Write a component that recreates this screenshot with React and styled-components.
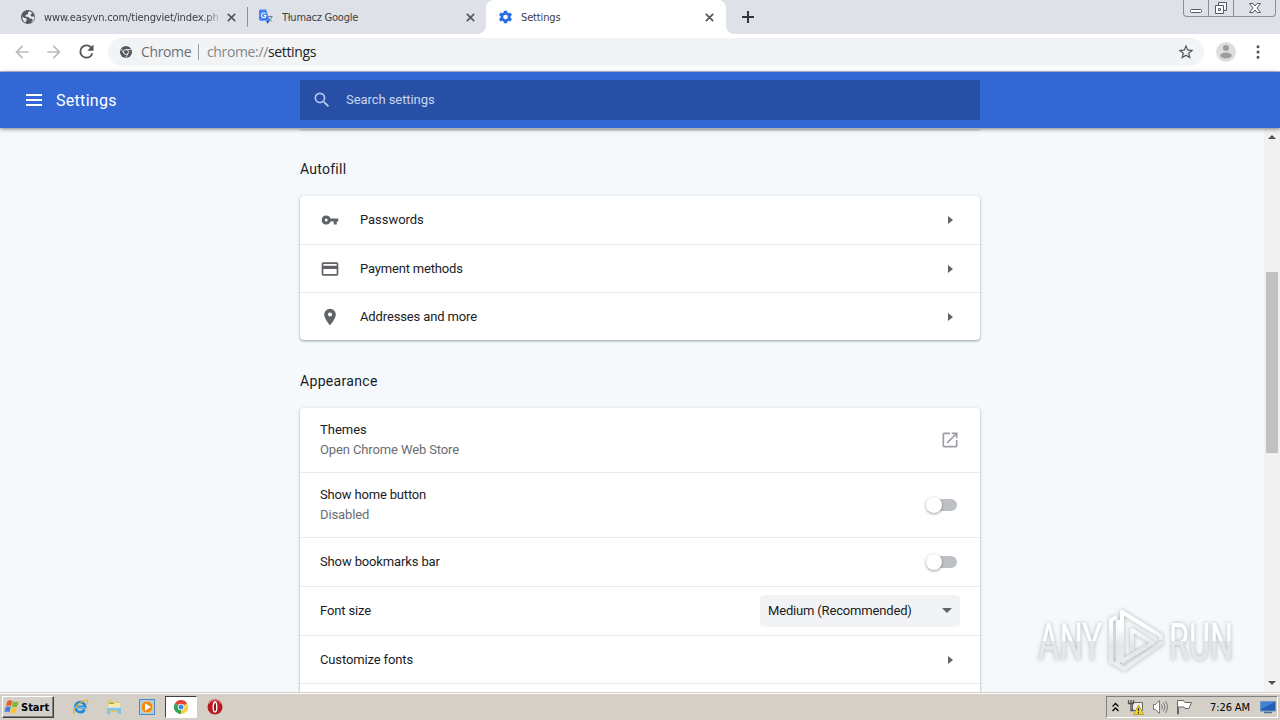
import React from 'react'
import styled, { createGlobalStyle } from 'styled-components'

const App = () => {
    return (
        <Screen>
            <GlobalStyle/>
            <TabStrip>
                <Tab $width={248} $left={20}>
                    <GlobeIcon/>
                    <TabTitle $width={175} $spacing="-0.14px" $fade>www.easyvn.com/tiengviet/index.ph</TabTitle>
                    <CloseIcon/>
                </Tab>
                <TabDivider/>
                <Tab $width={239} $left={11}>
                    <TranslateIcon/>
                    <TabTitle $width={176} $spacing="-0.25px">Tłumacz Google</TabTitle>
                    <CloseIcon/>
                </Tab>
                <ActiveTab $width={240} $left={12}>
                    <GearIcon/>
                    <TabTitle $width={176} $spacing="-0.15px">Settings</TabTitle>
                    <CloseIcon/>
                </ActiveTab>
                <NewTab>
                    <svg width="12" height="12"><path d="M6 0v12M0 6h12" stroke="#32363b" strokeWidth="2"/></svg>
                </NewTab>
                <WindowButtons>
                    <WindowButton $width={25}>
                        <svg width="14" height="16"><rect x="1.5" y="9.5" width="11" height="3" rx="1" fill="#fff" stroke="#555a66"/></svg>
                    </WindowButton>
                    <WindowButton $width={25}>
                        <svg width="14" height="16">
                            <path d="M4.500 2.500h8v8h-8z" fill="#f4f5f7" stroke="#555a66"/>
                            <path d="M1.500 5.500h8v8h-8z" fill="#fff" stroke="#555a66"/>
                            <path d="M4.500 8.500h2v2h-2z" fill="none" stroke="#555a66"/>
                        </svg>
                    </WindowButton>
                    <WindowButton $width={41}>
                        <svg width="14" height="16"><path d="M1.500 3.500h3.500l2 2.500 2-2.500h3.500l-3.500 4.500 3.500 4.500H9l-2-2.500-2 2.500H1.500L5 8z" fill="#fff" stroke="#555a66"/></svg>
                    </WindowButton>
                </WindowButtons>
            </TabStrip>
            <Toolbar>
                <NavButton><Glyph size={20} color="#b8babd" d="M20 11H7.830l5.590-5.590L12 4l-8 8 8 8 1.410-1.410L7.830 13H20v-2z"/></NavButton>
                <NavButton><Glyph size={20} color="#b8babd" d="M12 4l-1.410 1.410L16.170 11H4v2h12.170l-5.580 5.590L12 20l8-8z"/></NavButton>
                <NavButton><Glyph size={21} color="#505357" d="M17.650 6.350A7.958 7.958 0 0 0 12 4a8 8 0 1 0 7.730 10h-2.080A5.990 5.990 0 0 1 12 18a6 6 0 1 1 0-12c1.660 0 3.140.69 4.220 1.780L13 11h7V4l-2.350 2.350z"/></NavButton>
                <Omnibox>
                    <ChromeMark/>
                    <Scheme>Chrome</Scheme>
                    <OmniDivider/>
                    <Url><span>chrome://</span>settings</Url>
                    <Glyph size={18} color="#505357" d="M22 9.240l-7.190-.62L12 2 9.190 8.630 2 9.240l5.460 4.730L5.820 21 12 17.270 18.180 21l-1.630-7.030L22 9.240zM12 15.400l-3.760 2.270 1-4.280-3.320-2.880 4.380-.38L12 6.100l1.710 4.040 4.380.38-3.320 2.880 1 4.280L12 15.400z"/>
                </Omnibox>
                <Avatar>
                    <svg width="20" height="20"><circle cx="10" cy="10" r="10" fill="#dddddf"/><circle cx="10" cy="6" r="3" fill="#9b9c9e"/><ellipse cx="10" cy="13.500" rx="5.700" ry="3" fill="#9b9c9e"/></svg>
                </Avatar>
                <Glyph size={20} color="#505357" d="M12 7.500a1.800 1.800 0 1 0 0-3.600 1.800 1.800 0 0 0 0 3.600zm0 2.700a1.800 1.800 0 1 0 0 3.600 1.800 1.800 0 0 0 0-3.600zm0 6.300a1.800 1.800 0 1 0 0 3.600 1.800 1.800 0 0 0 0-3.600z"/>
            </Toolbar>
            <Header>
                <Brand>
                    <svg width="16" height="12"><path d="M0 1h16M0 6h16M0 11h16" stroke="#fff" strokeWidth="2"/></svg>
                    <HeaderTitle>Settings</HeaderTitle>
                </Brand>
                <Search>
                    <Glyph size={20} color="#b9cbf1" d="M15.500 14h-.79l-.28-.27A6.471 6.471 0 0 0 16 9.500 6.500 6.500 0 1 0 9.500 16c1.610 0 3.090-.59 4.230-1.570l.27.28v.79l5 4.990L20.490 19l-4.990-5zm-6 0a4.500 4.500 0 1 1 0-9 4.500 4.500 0 0 1 0 9z"/>
                    <SearchText>Search settings</SearchText>
                </Search>
            </Header>
            <Content>
                <Column>
                    <PreviousCard/>
                    <SectionTitle $height={67} $top={30} $spacing="0.25px">Autofill</SectionTitle>
                    <Card>
                        <Row $height={48}>
                            <RowIcon><Glyph size={18} color="#5f6368" d="M12.650 10A5.990 5.990 0 0 0 7 6a6 6 0 1 0 5.650 8H17v4h4v-4h2v-4H12.650zM7 14a2 2 0 1 1 0-4 2 2 0 0 1 0 4z"/></RowIcon>
                            <Label $spacing="-0.05px">Passwords</Label>
                            <Arrow/>
                        </Row>
                        <Row $height={47}>
                            <RowIcon><Glyph size={20} color="#5f6368" d="M20 4H4c-1.110 0-1.990.89-1.990 2L2 18c0 1.110.89 2 2 2h16c1.110 0 2-.89 2-2V6c0-1.110-.89-2-2-2zm0 14H4v-6h16v6zm0-10H4V6h16v2z"/></RowIcon>
                            <Label $spacing="-0.18px">Payment methods</Label>
                            <Arrow/>
                        </Row>
                        <Row $height={47}>
                            <RowIcon><Glyph size={20} color="#5f6368" d="M12 2a7 7 0 0 0-7 7c0 5.250 7 13 7 13s7-7.750 7-13a7 7 0 0 0-7-7zm0 9.500a2.500 2.500 0 1 1 0-5 2.500 2.500 0 0 1 0 5z"/></RowIcon>
                            <Label>Addresses and more</Label>
                            <Arrow/>
                        </Row>
                    </Card>
                    <SectionTitle $height={68} $top={31} $spacing="0.33px">Appearance</SectionTitle>
                    <Card>
                        <Row $height={64}>
                            <div>
                                <Label $spacing="0">Themes</Label>
                                <SubLabel>Open Chrome Web Store</SubLabel>
                            </div>
                            <Glyph size={20} color="#9a9ea3" d="M19 19H5V5h7V3H5a2 2 0 0 0-2 2v14a2 2 0 0 0 2 2h14c1.100 0 2-.9 2-2v-7h-2v7zM14 3v2h3.590l-9.830 9.830 1.410 1.410L19 6.410V10h2V3h-7z"/>
                        </Row>
                        <Row $height={64}>
                            <div>
                                <Label $spacing="-0.17px">Show home button</Label>
                                <SubLabel>Disabled</SubLabel>
                            </div>
                            <Toggle><Knob/></Toggle>
                        </Row>
                        <Row $height={48}>
                            <Label>Show bookmarks bar</Label>
                            <Toggle><Knob/></Toggle>
                        </Row>
                        <Row $height={48}>
                            <Label>Font size</Label>
                            <Select>
                                Medium (Recommended)
                                <svg width="10" height="5"><path d="M0 0h10L5 5z" fill="#5f6368"/></svg>
                            </Select>
                        </Row>
                        <Row $height={47}>
                            <Label>Customize fonts</Label>
                            <Arrow/>
                        </Row>
                        <Row $height={48}/>
                    </Card>
                </Column>
                <Scrollbar>
                    <svg width="8" height="4"><path d="M0 4h8L4 0z" fill="#505050"/></svg>
                    <Thumb/>
                    <svg width="8" height="4"><path d="M0 0h8L4 4z" fill="#505050"/></svg>
                </Scrollbar>
                <Watermark/>
            </Content>
            <Taskbar>
                <StartButton><WindowsFlag/>Start</StartButton>
                <QuickLaunch>
                    <TaskItem><ExplorerIcon/></TaskItem>
                    <TaskItem><FolderIcon/></TaskItem>
                    <TaskItem><PlayerIcon/></TaskItem>
                    <TaskItem $pressed><ChromeIcon/></TaskItem>
                    <TaskItem><OperaIcon/></TaskItem>
                </QuickLaunch>
                <Tray>
                    <svg width="7" height="10"><path d="M.5 4.500l3-3 3 3M.5 9l3-3 3 3" fill="none" stroke="#000" strokeWidth="1.300"/></svg>
                    <NetworkIcon/>
                    <SpeakerIcon/>
                    <FlagIcon/>
                    <Clock>7:26 AM</Clock>
                    <DesktopIcon/>
                </Tray>
            </Taskbar>
        </Screen>
    )
}

export default App

const Glyph = ({ size, color, d }) => (
    <svg width={size} height={size} viewBox="0 0 24 24"><path d={d} fill={color}/></svg>
)

const Arrow = () => (
    <ArrowBox><svg width="5" height="8"><path d="M0 0v8l5-4z" fill="#5f6368"/></svg></ArrowBox>
)

const CloseIcon = () => (
    <svg width="9" height="9"><path d="M.8.8l7.400 7.400M8.200.8L.8 8.200" stroke="#55585d" strokeWidth="1.700"/></svg>
)

const GlobeIcon = () => (
    <svg width="16" height="16" viewBox="0 0 16 16">
        <circle cx="8" cy="8" r="7" fill="#55595e"/>
        <path d="M9.500 2.300L7.800 3.500l.3 1.600-2.400.8-.5 1.600 3.300.4 1.200 1.600 2.500.2.400 1.700-1.900 2 2.500-1.400 1.200-3-.3-1.800-2.200.5-1.300-1.300.5-1.500 1.600-1zM2.200 7.600l2.300 1.500 2.100.4.300 1.700-1.200.8.300 1.800-1.700-.9-1.600-2.400z" fill="#e6e8ec"/>
    </svg>
)

const TranslateIcon = () => (
    <svg width="15" height="16" viewBox="0 0 16 16">
        <path d="M7 4h7.500l1 1v10l-1 1H10z" fill="#dfe2e7"/>
        <path d="M9.500 7.500h5M12 6.500v1m1.700.2c-.6 2.300-2 3.600-3.500 4.600m0-3c.7 1.500 2 2.500 3.300 3" stroke="#6c7c8c" fill="none"/>
        <path d="M1 0h6.500l3.900 12H1.200L0 11V1z" fill="#4284f3"/>
        <path d="M7.500 12h4l-2.400 3.500z" fill="#285fc6"/>
        <path d="M6.800 4.600A2.400 2.400 0 1 0 7.400 6.500H5.200" fill="none" stroke="#fff" strokeWidth="1.100"/>
    </svg>
)

const GearIcon = () => (
    <svg width="15" height="16" viewBox="-1 -1 26 26">
        <path fill="#2a6de0" d="M20.600 13.300a9 9 0 0 0 0-2.600l2.600-2-2.600-4.500-3.100 1.300a9 9 0 0 0-2.200-1.300L14.800 1H9.200l-.5 3.200a9 9 0 0 0-2.200 1.300L3.400 4.200.8 8.700l2.600 2a9 9 0 0 0 0 2.600l-2.600 2 2.600 4.500 3.100-1.300c.7.500 1.400 1 2.200 1.300l.5 3.200h5.600l.5-3.200c.8-.3 1.500-.8 2.200-1.300l3.100 1.300 2.600-4.500zM12 16a4 4 0 1 1 0-8 4 4 0 0 1 0 8z"/>
    </svg>
)

const ChromeMark = () => (
    <svg width="12" height="12" viewBox="0 0 12 12">
        <circle cx="6" cy="6" r="6" fill="#55595e"/>
        <circle cx="6" cy="6" r="2.500" fill="none" stroke="#f1f3f4" strokeWidth=".9"/>
        <path d="M6 3.500h5.300M3.800 7.200L1.300 3M8.200 7.200L5.800 11.700" stroke="#f1f3f4" strokeWidth=".8"/>
    </svg>
)

const WindowsFlag = () => (
    <svg width="17" height="16" viewBox="0 0 17 16">
        <path d="M3.500 2C5 1 6.500 1 8.400 2L7 7.200C5.200 6.300 3.700 6.400 2 7.200z" fill="#ee5b26"/>
        <path d="M9.200 2.300c1.800 1 3.500 1 5.500 0L13.200 7.500c-1.900.9-3.600.9-5.400 0z" fill="#7fba2f"/>
        <path d="M1.800 8.100c1.700-.8 3.200-.9 5 0L5.400 13.200c-1.800-.9-3.500-.8-5.100 0z" fill="#3d83d9"/>
        <path d="M7.600 8.400c1.800.9 3.500.9 5.400 0l-1.500 5.200c-1.800.9-3.500.9-5.300 0z" fill="#fbc42c"/>
    </svg>
)

const ExplorerIcon = () => (
    <svg width="17" height="16" viewBox="0 0 17 16">
        <path d="M12.600 10.500A5 5 0 1 1 13.200 8H5" fill="none" stroke="#238bd7" strokeWidth="2.800"/>
        <path d="M3.400 8.300h10" stroke="#75c5f4"/>
        <path d="M2.700 14.600C-.3 14 2.200 8.500 7 4.700 11.600 1 16 .1 15.800 2.700c0 .7-.3 1.300-.7 2" fill="none" stroke="#e7b42c" strokeWidth="1.300"/>
    </svg>
)

const FolderIcon = () => (
    <svg width="16" height="16" viewBox="0 0 16 16">
        <path d="M1 3l1-1.500h4L7 3h7v10H1z" fill="#e9c65b"/>
        <path d="M2 4h12v6H2z" fill="#f8e9a2"/>
        <path d="M3 4.500h5" stroke="#69b56b"/>
        <path d="M1 8h14v7h-3v-3.500H4V15H1z" fill="#83c2e3"/>
        <path d="M1 8.500h14" stroke="#c5e6f5"/>
    </svg>
)

const PlayerIcon = () => (
    <svg width="16" height="16" viewBox="0 0 16 16">
        <rect x=".5" y=".5" width="15" height="15" fill="#a4d0ee" stroke="#4b8dc4"/>
        <circle cx="8" cy="8" r="6" fill="#ef8b1d" stroke="#fbc879"/>
        <path d="M6 4.300v7.400L12 8z" fill="#fff"/>
    </svg>
)

const ChromeIcon = () => (
    <svg width="14" height="14" viewBox="0 0 14 14">
        <path d="M7 7L.9 3.500A7 7 0 0 1 13.100 3.500z" fill="#e44134"/>
        <path d="M7 7L.9 3.500A7 7 0 0 0 7 14z" fill="#31a351"/>
        <path d="M7 7l6.100-3.500A7 7 0 0 1 7 14z" fill="#fdcf3b"/>
        <circle cx="7" cy="7" r="3.300" fill="#fff"/>
        <circle cx="7" cy="7" r="2.500" fill="#4285e8"/>
    </svg>
)

const OperaIcon = () => (
    <svg width="16" height="16" viewBox="0 0 16 16">
        <circle cx="8" cy="8" r="7.500" fill="#b71922"/>
        <path d="M1.800 5a6.800 6.800 0 0 1 12.400 0" fill="none" stroke="#dd6165" strokeWidth="1.500"/>
        <ellipse cx="8" cy="8" rx="1.800" ry="5" fill="#94101a" stroke="#fff" strokeWidth="1.400"/>
    </svg>
)

const NetworkIcon = () => (
    <svg width="17" height="16" viewBox="0 0 17 16">
        <path d="M5.500 3.500h10v8h-10z" fill="#eee" stroke="#666"/>
        <path d="M1.500 1v3.500h5V1M4 1v10.500h3" fill="none" stroke="#555" strokeWidth="1.300"/>
        <path d="M11.500 6l5 9.500h-10z" fill="#f6d529" stroke="#a98b11" strokeWidth=".7"/>
        <path d="M11.500 9v3.300M11.500 13v1.400" stroke="#333" strokeWidth="1.200"/>
    </svg>
)

const SpeakerIcon = () => (
    <svg width="17" height="16" viewBox="0 0 17 16">
        <path d="M1.500 5.500h2l4-4v13l-4-4h-2z" fill="#fff" stroke="#777"/>
        <path d="M9.500 5.500q1.800 2.500 0 5M11.500 3.700q3 4.300 0 8.600M13.500 2.200q4 5.800 0 11.600" fill="none" stroke="#777"/>
    </svg>
)

const FlagIcon = () => (
    <svg width="16" height="16" viewBox="0 0 16 16">
        <path d="M.5 15V1.500h6l1.500 2h6.500l-2.500 6H8l-1-1.500H1.500V15z" fill="#fff" stroke="#666"/>
    </svg>
)

const DesktopIcon = () => (
    <svg width="16" height="14" viewBox="0 0 16 14">
        <rect x=".5" y="1.500" width="15" height="9.500" fill="#245fb6" stroke="#6f93bf"/>
        <path d="M1 2h14L1 9z" fill="#4184d4"/>
        <path d="M4 12.500h8" stroke="#506d93" strokeWidth="1.500"/>
    </svg>
)

const Watermark = () => (
    <WatermarkBox>
        <svg width="210" height="80" viewBox="0 0 210 80">
            <defs>
                <linearGradient id="letters" x1="0" y1="-37" x2="0" y2="0" gradientUnits="userSpaceOnUse">
                    <stop offset=".48" stopColor="#fff"/>
                    <stop offset=".5" stopColor="#e5e7e8"/>
                </linearGradient>
                <linearGradient id="play" x1="0" y1="10" x2="0" y2="70" gradientUnits="userSpaceOnUse">
                    <stop offset=".25" stopColor="#fff"/>
                    <stop offset=".6" stopColor="#e3e5e6"/>
                    <stop offset="1" stopColor="#edf0f1"/>
                </linearGradient>
            </defs>
            <WatermarkText transform="translate(8 60) scale(.64 1)" textLength="100" lengthAdjust="spacingAndGlyphs">ANY</WatermarkText>
            <WatermarkText transform="translate(139 60) scale(.64 1)" textLength="100" lengthAdjust="spacingAndGlyphs">RUN</WatermarkText>
            <g fill="none" stroke="url(#play)" strokeWidth="4" strokeLinejoin="round">
                <path d="M87 17l-6 3v42l7 3"/>
                <path d="M131 40V36L92 12v49l31-18-21-13v21"/>
                <path d="M133 42L94 69l-6-4V20"/>
            </g>
        </svg>
    </WatermarkBox>
)

const GlobalStyle = createGlobalStyle`
body{
margin:0;
overflow:hidden;
}
*{
box-sizing:border-box;
}
svg{
display:block;
flex-shrink:0;
}
`
const Screen = styled.div`
width:1280px;
height:720px;
display:flex;
flex-direction:column;
overflow:hidden;
background:#f5f9fc;
font-family:Roboto, sans-serif;
font-size:13px;
color:#1b1c1f;
`
const TabStrip = styled.div`
height:34px;
flex-shrink:0;
display:flex;
background:#dee1e7;
`
const Tab = styled.div`
width:${({ $width }) => $width - 1}px;
height:34px;
padding-left:${({ $left }) => $left}px;
display:flex;
align-items:center;
gap:8px;
`
const ActiveTab = styled(Tab)`
width:240px;
background:#fff;
border-radius:8px 8px 0 0;
position:relative;
&::before, &::after{
content:'';
position:absolute;
bottom:0;
width:8px;
height:8px;
}
&::before{
left:-8px;
background:radial-gradient(circle at 0 0, transparent 7.5px, #fff 8px);
}
&::after{
right:-8px;
background:radial-gradient(circle at 100% 0, transparent 7.5px, #fff 8px);
}
`
const TabTitle = styled.div`
width:${({ $width }) => $width}px;
padding-top:1px;
overflow:hidden;
white-space:nowrap;
font-family:"DejaVu Sans Condensed", "DejaVu Sans", sans-serif;
font-stretch:condensed;
font-size:11px;
line-height:16px;
letter-spacing:${({ $spacing }) => $spacing || '0'};
color:#3c4043;
${({ $fade }) => $fade && 'mask-image:linear-gradient(90deg, #000 92%, rgba(0,0,0,.2));'}
`
const TabDivider = styled.div`
width:1px;
height:20px;
margin-top:7px;
background:#8b9097;
`
const NewTab = styled.div`
width:44px;
display:flex;
align-items:center;
justify-content:center;
`
const WindowButtons = styled.div`
height:17px;
margin:0 4px 0 auto;
display:flex;
border:1px solid #8a8f9b;
border-top:0;
border-radius:0 0 4px 4px;
`
const WindowButton = styled.div`
width:${({ $width }) => $width}px;
display:flex;
align-items:center;
justify-content:center;
&:not(:last-child){
border-right:1px solid #8a8f9b;
}
`
const Toolbar = styled.div`
height:38px;
flex-shrink:0;
padding:0 12px 2px;
display:flex;
align-items:center;
background:#fff;
border-bottom:1px solid #b9c3d5;
`
const NavButton = styled.div`
width:32px;
display:flex;
`
const Omnibox = styled.div`
width:1096px;
height:28px;
padding:0 9px 0 12px;
display:flex;
align-items:center;
border-radius:14px;
background:#f1f3f4;
font-family:"Open Sans", sans-serif;
font-size:14px;
letter-spacing:-.36px;
color:#202124;
`
const Scheme = styled.div`
width:57px;
margin-left:9px;
color:#6b6f74;
`
const OmniDivider = styled.div`
width:1px;
height:16px;
margin-right:8px;
background:#9aa0a6;
`
const Url = styled.div`
flex:1;
span{
color:#80868b;
}
`
const Avatar = styled.div`
margin:0 12px;
`
const Header = styled.div`
height:56px;
flex-shrink:0;
display:flex;
align-items:center;
background:#3367d6;
box-shadow:0 1px 4px rgba(0,0,0,.5);
position:relative;
z-index:1;
`
const Brand = styled.div`
width:300px;
padding-left:26px;
display:flex;
align-items:center;
gap:14px;
`
const HeaderTitle = styled.div`
padding-top:2px;
font-size:16px;
line-height:20px;
letter-spacing:.3px;
color:#fff;
`
const Search = styled.div`
width:680px;
height:40px;
padding-left:12px;
display:flex;
align-items:center;
gap:14px;
background:#284fa6;
`
const SearchText = styled.div`
padding-bottom:2px;
color:#c9d6f2;
letter-spacing:-.07px;
`
const Content = styled.div`
flex:1;
min-height:0;
display:flex;
justify-content:space-between;
position:relative;
overflow:hidden;
`
const Column = styled.div`
width:680px;
margin-left:300px;
`
const PreviousCard = styled.div`
height:1px;
background:#fff;
box-shadow:0 1px 2px rgba(60,64,67,.4);
`
const SectionTitle = styled.div`
height:${({ $height }) => $height}px;
padding-top:${({ $top }) => $top}px;
font-size:14px;
line-height:20px;
letter-spacing:${({ $spacing }) => $spacing};
`
const Card = styled.div`
background:#fff;
border-radius:4px;
box-shadow:0 1px 2px rgba(60,64,67,.35), 0 1px 3px 1px rgba(60,64,67,.12);
`
const Row = styled.div`
height:${({ $height }) => $height}px;
padding:0 20px;
display:flex;
align-items:center;
justify-content:space-between;
box-sizing:content-box;
&:not(:last-child){
border-bottom:1px solid #e9eaeb;
}
`
const RowIcon = styled.div`
width:20px;
margin-right:20px;
display:flex;
justify-content:center;
`
const Label = styled.div`
flex:1;
line-height:20px;
letter-spacing:${({ $spacing }) => $spacing || '-.13px'};
`
const SubLabel = styled.div`
line-height:20px;
letter-spacing:-.12px;
color:#6a6d72;
`
const ArrowBox = styled.div`
width:20px;
display:flex;
justify-content:center;
`
const Toggle = styled.div`
width:30px;
height:12px;
margin-right:3px;
display:flex;
align-items:center;
border-radius:6px;
background:#bdc1c6;
`
const Knob = styled.div`
width:16px;
height:16px;
margin-left:-1px;
border-radius:50%;
background:#fff;
box-shadow:0 1px 3px rgba(0,0,0,.4);
`
const Select = styled.div`
width:200px;
height:32px;
padding:0 8px 1px;
display:flex;
align-items:center;
justify-content:space-between;
border-radius:4px;
background:#f1f3f4;
letter-spacing:-.17px;
`
const Scrollbar = styled.div`
width:16px;
padding:7px 0 7px;
display:flex;
flex-direction:column;
align-items:center;
justify-content:space-between;
background:#f1f1f1;
`
const Thumb = styled.div`
width:12px;
height:181px;
margin-bottom:95px;
background:#c1c1c1;
`
const WatermarkBox = styled.div`
position:absolute;
left:1030px;
top:472px;
filter:drop-shadow(0 0 2px rgba(0,0,0,.28));
`
const WatermarkText = styled.text`
font-family:Roboto, sans-serif;
font-size:52px;
fill:url(#letters);
`
const Taskbar = styled.div`
height:28px;
flex-shrink:0;
padding:2px 2px 1px;
display:flex;
align-items:center;
background:#d4d0c8;
border-top:1px solid #d4d0c8;
box-shadow:inset 0 1px #fff;
`
const StartButton = styled.div`
width:52px;
height:22px;
padding-left:1px;
display:flex;
align-items:center;
border:1px solid;
border-color:#fff #404040 #404040 #fff;
box-shadow:inset -1px -1px #808080;
font-family:"DejaVu Sans Condensed", "DejaVu Sans", sans-serif;
font-stretch:condensed;
font-size:11px;
font-weight:bold;
color:#000;
`
const QuickLaunch = styled.div`
margin-left:10px;
display:flex;
gap:1.700px;
`
const TaskItem = styled.div`
width:32px;
height:22px;
display:flex;
align-items:center;
justify-content:center;
border:1px solid transparent;
${({ $pressed }) => $pressed && 'background:#fff;border-color:#404040 #fff #fff #404040;'}
`
const Tray = styled.div`
width:172px;
height:22px;
margin-left:auto;
padding:0 1px 0 5px;
display:flex;
align-items:center;
gap:8px;
border:1px solid;
border-color:#808080 #fff #fff #808080;
`
const Clock = styled.div`
flex:1;
margin-left:9px;
font-family:"DejaVu Sans Condensed", "DejaVu Sans", sans-serif;
font-stretch:condensed;
font-size:11px;
letter-spacing:-.1px;
white-space:nowrap;
color:#000;
`
